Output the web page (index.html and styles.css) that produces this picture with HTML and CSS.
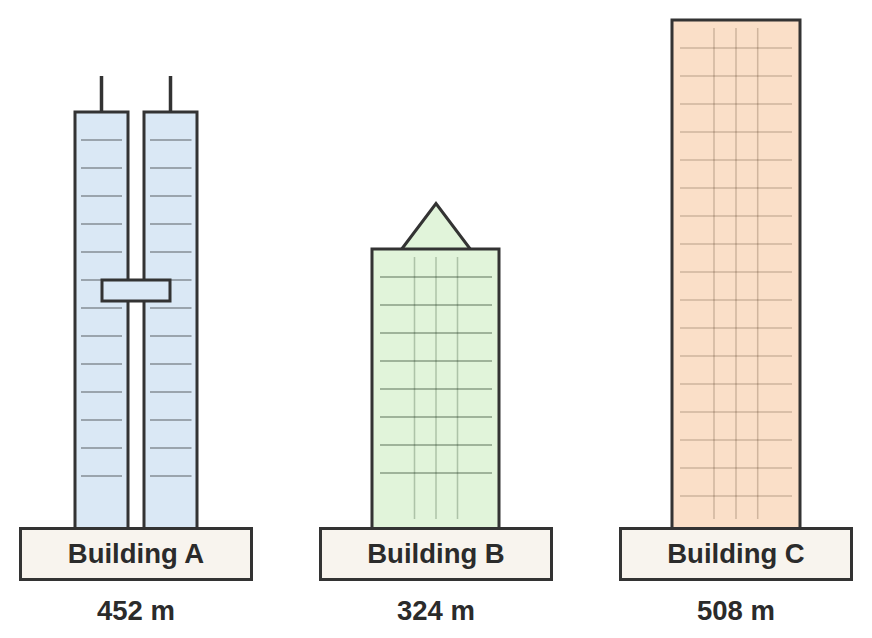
FILE: index.html
```html
<!DOCTYPE html>
<html>
<head>
<meta charset="utf-8">
<link rel="stylesheet" href="styles.css">
</head>
<body>
<div class="row">
  <div class="col">
    <svg class="art" viewBox="19 0 234 527" width="234" height="527">
      <line x1="101.5" y1="76" x2="101.5" y2="112" class="mast"/>
      <line x1="170.5" y1="76" x2="170.5" y2="112" class="mast"/>
      <rect x="75" y="112" width="53" height="420" class="tower-a"/>
      <rect x="144" y="112" width="53" height="420" class="tower-a"/>
      <g class="floors-a">
        <path d="M81 140H122M81 168H122M81 196H122M81 224H122M81 252H122M81 280H122M81 308H122M81 336H122M81 364H122M81 392H122M81 420H122M81 448H122M81 476H122"/>
        <path d="M150 140H191.5M150 168H191.5M150 196H191.5M150 224H191.5M150 252H191.5M150 280H191.5M150 308H191.5M150 336H191.5M150 364H191.5M150 392H191.5M150 420H191.5M150 448H191.5M150 476H191.5"/>
      </g>
      <rect x="102" y="280" width="68" height="21" class="tower-a"/>
    </svg>
    <div class="plate">Building A</div>
    <div class="height">452 m</div>
  </div>
  <div class="col">
    <svg class="art" viewBox="319 0 234 527" width="234" height="527">
      <polygon points="401,250 436,203.5 471,250" class="tower-b"/>
      <rect x="372" y="249" width="127" height="283" class="tower-b"/>
      <path class="vgrid-b" d="M414.5 257V519M436 257V519M457.5 257V519"/>
      <path class="hgrid-b" d="M380 277H492M380 305H492M380 333H492M380 361H492M380 389H492M380 417H492M380 445H492M380 473H492"/>
    </svg>
    <div class="plate">Building B</div>
    <div class="height">324 m</div>
  </div>
  <div class="col">
    <svg class="art" viewBox="619 0 234 527" width="234" height="527">
      <rect x="672" y="20" width="128" height="512" class="tower-c"/>
      <path class="vgrid-c" d="M714 28V519M736 28V519M757.7 28V519"/>
      <path class="hgrid-c" d="M680 48H792M680 76H792M680 104H792M680 132H792M680 160H792M680 188H792M680 216H792M680 244H792M680 272H792M680 300H792M680 328H792M680 356H792M680 384H792M680 412H792M680 440H792M680 468H792M680 496H792"/>
    </svg>
    <div class="plate">Building C</div>
    <div class="height">508 m</div>
  </div>
</div>
</body>
</html>
```

FILE: styles.css
```css
html, body {
  margin: 0;
  padding: 0;
  background: #ffffff;
}
body {
  font-family: "Liberation Sans", Arial, sans-serif;
  color: #2b2b2b;
}
.row {
  display: flex;
  gap: 66px;
  padding-left: 19px;
}
.col {
  width: 234px;
  display: flex;
  flex-direction: column;
}
.art {
  display: block;
  overflow: hidden;
}
.mast {
  stroke: #333333;
  stroke-width: 3.5;
}
.tower-a {
  fill: #dae8f5;
  stroke: #333333;
  stroke-width: 3;
}
.floors-a path {
  stroke: #9aa4ad;
  stroke-width: 2;
  fill: none;
}
.tower-b {
  fill: #e1f4da;
  stroke: #333333;
  stroke-width: 3;
  stroke-linejoin: miter;
}
.vgrid-b {
  stroke: rgba(40, 70, 40, 0.28);
  stroke-width: 1.5;
  fill: none;
}
.hgrid-b {
  stroke: rgba(30, 50, 30, 0.45);
  stroke-width: 1.5;
  fill: none;
}
.tower-c {
  fill: #fadfc8;
  stroke: #333333;
  stroke-width: 3;
}
.vgrid-c, .hgrid-c {
  stroke: rgba(60, 30, 10, 0.22);
  stroke-width: 1.5;
  fill: none;
}
.plate {
  box-sizing: border-box;
  height: 54px;
  border: 3px solid #333333;
  background: #f8f4ee;
  text-align: center;
  font-weight: bold;
  font-size: 27.5px;
  line-height: 48px;
}
.height {
  margin-top: 15px;
  text-align: center;
  font-weight: bold;
  font-size: 27.5px;
  line-height: 30px;
}
```
